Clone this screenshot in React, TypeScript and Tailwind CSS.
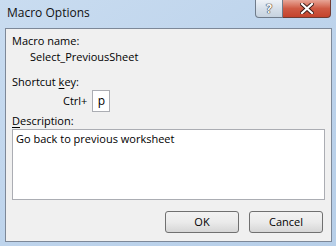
import React from "react";

export default function App() {
  const font = { fontFamily: '"Open Sans", "Noto Sans", sans-serif' };
  return (
    <div
      className="w-[336px] h-[246px] flex flex-col bg-gradient-to-br from-[#c9dcf0] via-[#bed4ec] to-[#b7cfe9] text-[11px] text-black"
      style={font}
    >
      <div className="h-[28px] flex items-start">
        <div className="pl-[7px] pt-[4px] text-[12px] leading-[17px] text-[#111]">Macro Options</div>
        <div className="ml-auto mr-[5px] flex">
          <div className="w-[28px] h-[18px] rounded-bl-[4px] border border-t-0 border-[#6f7b8a] bg-gradient-to-b from-[#eef2f7] via-[#d7e0ea] to-[#c6d2df] flex items-center justify-center">
            <span
              className="text-[12px] font-bold leading-none text-white"
              style={{ textShadow: "0 0 1px #333, 0 0 1px #333, 0 0 1px #333" }}
            >
              ?
            </span>
          </div>
          <div className="w-[48px] h-[18px] rounded-br-[4px] border border-l-0 border-t-0 border-[#6f3a32] bg-gradient-to-b from-[#e7a597] via-[#cf5a44] to-[#c4432c] flex items-center justify-center">
            <svg width="14" height="11" viewBox="0 0 14 11">
              <path d="M2 1 L12 10 M12 1 L2 10" stroke="#3b1a16" strokeWidth="4" strokeLinecap="square" />
              <path d="M2 1 L12 10 M12 1 L2 10" stroke="#ffffff" strokeWidth="2.2" strokeLinecap="square" />
            </svg>
          </div>
        </div>
      </div>
      <div className="ml-[5px] mr-[4px] h-[214px] border border-[#7d8898] bg-[#f0f0f0] flex flex-col px-[6px] pt-[4px] leading-[16px]">
        <div>Macro name:</div>
        <div className="pl-[18px]">Select_PreviousSheet</div>
        <div className="mt-[9px]">
          Shortcut <span className="underline underline-offset-2">k</span>ey:
        </div>
        <div className="flex items-center pl-[51px] h-[22px]">
          <span className="mr-[5px]">Ctrl+</span>
          <div className="w-[18px] h-[22px] border border-[#abadb3] bg-white flex items-center justify-center text-[12px]">p</div>
        </div>
        <div className="mt-[1px]">
          <span className="underline underline-offset-2">D</span>escription:
        </div>
        <div className="h-[71px] border border-[#abadb3] bg-white px-[3px] pt-[1px]">
          Go back to previous worksheet
        </div>
        <div className="flex justify-end gap-[10px] mt-[11px] pr-[2px]">
          <button className="w-[74px] h-[22px] rounded-[3px] border border-[#707070] bg-gradient-to-b from-[#f2f2f2] via-[#ebebeb] to-[#d6d6d6]">
            OK
          </button>
          <button className="w-[74px] h-[22px] rounded-[3px] border border-[#707070] bg-gradient-to-b from-[#f2f2f2] via-[#ebebeb] to-[#d6d6d6]">
            Cancel
          </button>
        </div>
      </div>
    </div>
  );
}
